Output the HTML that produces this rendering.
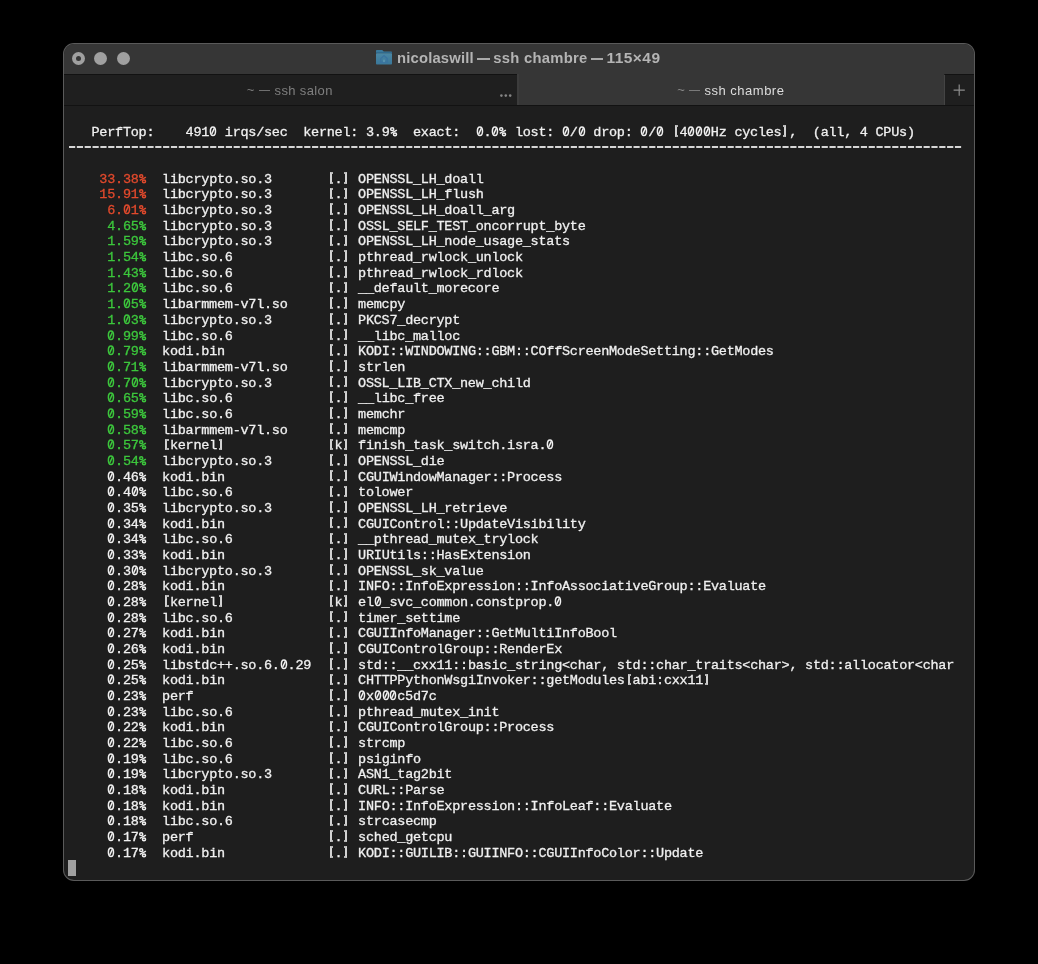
<!DOCTYPE html>
<html><head><meta charset="utf-8">
<style>
html,body{margin:0;padding:0;background:#000;width:1038px;height:964px;overflow:hidden;}
.frame{position:absolute;left:63px;top:43px;width:912px;height:838px;border-radius:11px;background:#5a5a5a;}
.win{position:absolute;left:64px;top:44px;width:910px;height:836px;border-radius:10px;background:#1e1e1e;overflow:hidden;}
.layer{position:absolute;left:0;top:0;width:910px;height:836px;will-change:transform;}
.title{position:absolute;left:0;top:0;width:910px;height:30px;background:#363636;}
.light{position:absolute;top:7.6px;width:13px;height:13px;border-radius:50%;background:#a0a0a0;}
.light.close::after{content:"";position:absolute;left:4px;top:4px;width:5px;height:5px;border-radius:50%;background:#363636;}
.tdash{position:absolute;top:13.6px;width:12.6px;height:2px;background:#aaaaaa;}
.ttext{position:absolute;top:5.8px;font-family:"Liberation Sans",sans-serif;font-weight:bold;font-size:14.8px;color:#b4b4b4;white-space:nowrap;}
.folder{position:absolute;left:312px;top:6px;}
.tab1{position:absolute;left:0;top:30px;width:453px;height:31px;background:#1f1f1f;border-top:1px solid #121212;}
.tabsep{position:absolute;left:453px;top:30px;width:2px;height:31px;background:#3c3c3c;}
.tab2{position:absolute;left:455px;top:30px;width:425px;height:31px;background:#363636;}
.plus{position:absolute;left:881px;top:30px;width:29px;height:31px;background:#1f1f1f;border-top:1px solid #121212;}
.plussep{position:absolute;left:880px;top:31px;width:1px;height:30px;background:#444;}
.tabline{position:absolute;left:0;top:61px;width:910px;height:1px;background:#121212;}
.tt{position:absolute;top:38.5px;font-family:"Liberation Sans",sans-serif;font-size:13px;letter-spacing:0.5px;white-space:nowrap;}
.tl{position:absolute;font-family:"Liberation Sans",sans-serif;font-size:13px;white-space:nowrap;top:38px;}
.md{position:absolute;top:45.9px;width:11.2px;height:1.2px;}
.dots i{position:absolute;top:50px;width:3px;height:3px;border-radius:50%;background:#8a8a8a;}
.term{position:absolute;left:4px;top:65.1px;font-family:"Liberation Mono",monospace;font-size:13.5px;letter-spacing:-0.26px;line-height:15.675px;color:#f0f0f0;-webkit-text-stroke:0.3px currentColor;white-space:pre;margin:0;}
.term div{height:15.675px;}
.dash{position:absolute;left:0;top:0;}
.c,.bl,.br{display:inline-block;font-style:normal;width:7.84px;height:15.675px;vertical-align:top;position:relative;}
.bl::before,.br::before{content:"";position:absolute;top:0.3px;width:1.2px;height:7.6px;border-top:2px solid #b4b4b4;border-bottom:2px solid #b4b4b4;}
.bl::before{left:3.4px;border-left:2px solid #d2d2d2;}
.br::before{left:1.8px;border-right:2px solid #d2d2d2;}
.c svg{position:absolute;left:0;top:0;width:8px;height:12px;fill:none;stroke:currentColor;stroke-width:1.5;overflow:visible;}
.r{color:#e0492c;}
.g{color:#3cc63c;}
.cur{position:absolute;left:4px;top:816px;width:8px;height:16px;background:#a0a0a0;}
</style></head><body>
<svg width="0" height="0" style="position:absolute"><defs><g id="z"><ellipse cx="3.95" cy="6.28" rx="2.55" ry="4.3"/><path d="M2.75 9.0L5.3 3.4"/></g><g id="p"><ellipse cx="2.2" cy="4.2" rx="1.55" ry="1.4"/><ellipse cx="5.0" cy="9.35" rx="1.55" ry="1.45"/><path d="M0.8 8.3L6.9 5.2"/></g></defs></svg>
<div class="frame"></div>
<div class="win">
<div class="layer">
 <div class="title"></div>
 <div class="light close" style="left:7.8px"></div>
 <div class="light" style="left:30.3px"></div>
 <div class="light" style="left:52.7px"></div>
 <svg class="folder" width="16" height="15" viewBox="0 0 16 15"><defs><linearGradient id="fg" x1="0" y1="0" x2="0" y2="1"><stop offset="0" stop-color="#4a87a5"/><stop offset="1" stop-color="#3a7799"/></linearGradient></defs><path d="M0.8 0h5.4l1.6 1.6h7.4a0.8 0.8 0 0 1 0.8 0.8V3H0V0.8A0.8 0.8 0 0 1 0.8 0z" fill="#3a799c"/><rect x="0" y="2.2" width="16" height="1.2" fill="#2d668a"/><rect x="0" y="3.2" width="16" height="11.3" rx="0.8" fill="url(#fg)"/><path d="M8 5.6l-3.2 3v3.8h6.4V8.6z" fill="none" stroke="#3a73a0" stroke-width="1.3"/><rect x="7.1" y="9.6" width="1.8" height="2.5" fill="#5a93b0"/></svg>
 <div class="ttext" style="left:333px;letter-spacing:0.18px">nicolaswill</div>
 <div class="tdash" style="left:413.1px"></div>
 <div class="ttext" style="left:429.3px;letter-spacing:0.27px">ssh chambre</div>
 <div class="tdash" style="left:526.6px"></div>
 <div class="ttext" style="left:542.5px;top:5.25px;font-size:15.5px;letter-spacing:0.45px">115×49</div>
 <div class="tab1"></div>
 <div class="tabsep"></div>
 <div class="tab2"></div>
 <div class="plus"></div>
 <div class="plussep"></div>
 <svg width="30" height="30" style="position:absolute;left:880px;top:31px"><path d="M15.2 9.6v11.2M9.6 15.2h11.2" stroke="#8c8c8c" stroke-width="1.2"/></svg>
 <div class="tabline"></div>
 <div class="tl" style="left:182.7px;color:#7c7c7c">~</div>
 <div class="md" style="left:194.8px;background:#6f6f6f"></div>
 <div class="tt" style="left:210.5px;color:#7f7f7f;letter-spacing:0.38px">ssh salon</div>
 <svg style="position:absolute;left:430px;top:45px" width="20" height="10" fill="#858585"><circle cx="7.4" cy="6.6" r="1.3"/><circle cx="11.8" cy="6.6" r="1.3"/><circle cx="16.2" cy="6.6" r="1.3"/></svg>
 <div class="tl" style="left:613.2px;color:#8a8a8a">~</div>
 <div class="md" style="left:625px;background:#7a7a7a"></div>
 <div class="tt" style="left:640.5px;color:#dedede">ssh chambre</div>
 <svg class="dash" width="910" height="110" fill="#d6d6d6"><rect x="5.00" y="102" width="6.2" height="2"/><rect x="12.84" y="102" width="6.2" height="2"/><rect x="20.68" y="102" width="6.2" height="2"/><rect x="28.52" y="102" width="6.2" height="2"/><rect x="36.36" y="102" width="6.2" height="2"/><rect x="44.20" y="102" width="6.2" height="2"/><rect x="52.04" y="102" width="6.2" height="2"/><rect x="59.88" y="102" width="6.2" height="2"/><rect x="67.72" y="102" width="6.2" height="2"/><rect x="75.56" y="102" width="6.2" height="2"/><rect x="83.40" y="102" width="6.2" height="2"/><rect x="91.24" y="102" width="6.2" height="2"/><rect x="99.08" y="102" width="6.2" height="2"/><rect x="106.92" y="102" width="6.2" height="2"/><rect x="114.76" y="102" width="6.2" height="2"/><rect x="122.60" y="102" width="6.2" height="2"/><rect x="130.44" y="102" width="6.2" height="2"/><rect x="138.28" y="102" width="6.2" height="2"/><rect x="146.12" y="102" width="6.2" height="2"/><rect x="153.96" y="102" width="6.2" height="2"/><rect x="161.80" y="102" width="6.2" height="2"/><rect x="169.64" y="102" width="6.2" height="2"/><rect x="177.48" y="102" width="6.2" height="2"/><rect x="185.32" y="102" width="6.2" height="2"/><rect x="193.16" y="102" width="6.2" height="2"/><rect x="201.00" y="102" width="6.2" height="2"/><rect x="208.84" y="102" width="6.2" height="2"/><rect x="216.68" y="102" width="6.2" height="2"/><rect x="224.52" y="102" width="6.2" height="2"/><rect x="232.36" y="102" width="6.2" height="2"/><rect x="240.20" y="102" width="6.2" height="2"/><rect x="248.04" y="102" width="6.2" height="2"/><rect x="255.88" y="102" width="6.2" height="2"/><rect x="263.72" y="102" width="6.2" height="2"/><rect x="271.56" y="102" width="6.2" height="2"/><rect x="279.40" y="102" width="6.2" height="2"/><rect x="287.24" y="102" width="6.2" height="2"/><rect x="295.08" y="102" width="6.2" height="2"/><rect x="302.92" y="102" width="6.2" height="2"/><rect x="310.76" y="102" width="6.2" height="2"/><rect x="318.60" y="102" width="6.2" height="2"/><rect x="326.44" y="102" width="6.2" height="2"/><rect x="334.28" y="102" width="6.2" height="2"/><rect x="342.12" y="102" width="6.2" height="2"/><rect x="349.96" y="102" width="6.2" height="2"/><rect x="357.80" y="102" width="6.2" height="2"/><rect x="365.64" y="102" width="6.2" height="2"/><rect x="373.48" y="102" width="6.2" height="2"/><rect x="381.32" y="102" width="6.2" height="2"/><rect x="389.16" y="102" width="6.2" height="2"/><rect x="397.00" y="102" width="6.2" height="2"/><rect x="404.84" y="102" width="6.2" height="2"/><rect x="412.68" y="102" width="6.2" height="2"/><rect x="420.52" y="102" width="6.2" height="2"/><rect x="428.36" y="102" width="6.2" height="2"/><rect x="436.20" y="102" width="6.2" height="2"/><rect x="444.04" y="102" width="6.2" height="2"/><rect x="451.88" y="102" width="6.2" height="2"/><rect x="459.72" y="102" width="6.2" height="2"/><rect x="467.56" y="102" width="6.2" height="2"/><rect x="475.40" y="102" width="6.2" height="2"/><rect x="483.24" y="102" width="6.2" height="2"/><rect x="491.08" y="102" width="6.2" height="2"/><rect x="498.92" y="102" width="6.2" height="2"/><rect x="506.76" y="102" width="6.2" height="2"/><rect x="514.60" y="102" width="6.2" height="2"/><rect x="522.44" y="102" width="6.2" height="2"/><rect x="530.28" y="102" width="6.2" height="2"/><rect x="538.12" y="102" width="6.2" height="2"/><rect x="545.96" y="102" width="6.2" height="2"/><rect x="553.80" y="102" width="6.2" height="2"/><rect x="561.64" y="102" width="6.2" height="2"/><rect x="569.48" y="102" width="6.2" height="2"/><rect x="577.32" y="102" width="6.2" height="2"/><rect x="585.16" y="102" width="6.2" height="2"/><rect x="593.00" y="102" width="6.2" height="2"/><rect x="600.84" y="102" width="6.2" height="2"/><rect x="608.68" y="102" width="6.2" height="2"/><rect x="616.52" y="102" width="6.2" height="2"/><rect x="624.36" y="102" width="6.2" height="2"/><rect x="632.20" y="102" width="6.2" height="2"/><rect x="640.04" y="102" width="6.2" height="2"/><rect x="647.88" y="102" width="6.2" height="2"/><rect x="655.72" y="102" width="6.2" height="2"/><rect x="663.56" y="102" width="6.2" height="2"/><rect x="671.40" y="102" width="6.2" height="2"/><rect x="679.24" y="102" width="6.2" height="2"/><rect x="687.08" y="102" width="6.2" height="2"/><rect x="694.92" y="102" width="6.2" height="2"/><rect x="702.76" y="102" width="6.2" height="2"/><rect x="710.60" y="102" width="6.2" height="2"/><rect x="718.44" y="102" width="6.2" height="2"/><rect x="726.28" y="102" width="6.2" height="2"/><rect x="734.12" y="102" width="6.2" height="2"/><rect x="741.96" y="102" width="6.2" height="2"/><rect x="749.80" y="102" width="6.2" height="2"/><rect x="757.64" y="102" width="6.2" height="2"/><rect x="765.48" y="102" width="6.2" height="2"/><rect x="773.32" y="102" width="6.2" height="2"/><rect x="781.16" y="102" width="6.2" height="2"/><rect x="789.00" y="102" width="6.2" height="2"/><rect x="796.84" y="102" width="6.2" height="2"/><rect x="804.68" y="102" width="6.2" height="2"/><rect x="812.52" y="102" width="6.2" height="2"/><rect x="820.36" y="102" width="6.2" height="2"/><rect x="828.20" y="102" width="6.2" height="2"/><rect x="836.04" y="102" width="6.2" height="2"/><rect x="843.88" y="102" width="6.2" height="2"/><rect x="851.72" y="102" width="6.2" height="2"/><rect x="859.56" y="102" width="6.2" height="2"/><rect x="867.40" y="102" width="6.2" height="2"/><rect x="875.24" y="102" width="6.2" height="2"/><rect x="883.08" y="102" width="6.2" height="2"/><rect x="890.92" y="102" width="6.2" height="2"/></svg>
 <div class="cur"></div>
 <div class="term"><div></div><div>   PerfTop:    491<i class="c"><svg><use href="#z"/></svg></i> irqs/sec  kernel: 3.9<i class="c"><svg><use href="#p"/></svg></i>  exact:  <i class="c"><svg><use href="#z"/></svg></i>.<i class="c"><svg><use href="#z"/></svg></i><i class="c"><svg><use href="#p"/></svg></i> lost: <i class="c"><svg><use href="#z"/></svg></i>/<i class="c"><svg><use href="#z"/></svg></i> drop: <i class="c"><svg><use href="#z"/></svg></i>/<i class="c"><svg><use href="#z"/></svg></i> <i class="bl"></i>4<i class="c"><svg><use href="#z"/></svg></i><i class="c"><svg><use href="#z"/></svg></i><i class="c"><svg><use href="#z"/></svg></i>Hz cycles<i class="br"></i>,  (all, 4 CPUs)</div><div></div><div></div><div><span class="r">    33.38<i class="c"><svg><use href="#p"/></svg></i></span>  libcrypto.so.3       <i class="bl"></i>.<i class="br"></i> OPENSSL_LH_doall</div><div><span class="r">    15.91<i class="c"><svg><use href="#p"/></svg></i></span>  libcrypto.so.3       <i class="bl"></i>.<i class="br"></i> OPENSSL_LH_flush</div><div><span class="r">     6.<i class="c"><svg><use href="#z"/></svg></i>1<i class="c"><svg><use href="#p"/></svg></i></span>  libcrypto.so.3       <i class="bl"></i>.<i class="br"></i> OPENSSL_LH_doall_arg</div><div><span class="g">     4.65<i class="c"><svg><use href="#p"/></svg></i></span>  libcrypto.so.3       <i class="bl"></i>.<i class="br"></i> OSSL_SELF_TEST_oncorrupt_byte</div><div><span class="g">     1.59<i class="c"><svg><use href="#p"/></svg></i></span>  libcrypto.so.3       <i class="bl"></i>.<i class="br"></i> OPENSSL_LH_node_usage_stats</div><div><span class="g">     1.54<i class="c"><svg><use href="#p"/></svg></i></span>  libc.so.6            <i class="bl"></i>.<i class="br"></i> pthread_rwlock_unlock</div><div><span class="g">     1.43<i class="c"><svg><use href="#p"/></svg></i></span>  libc.so.6            <i class="bl"></i>.<i class="br"></i> pthread_rwlock_rdlock</div><div><span class="g">     1.2<i class="c"><svg><use href="#z"/></svg></i><i class="c"><svg><use href="#p"/></svg></i></span>  libc.so.6            <i class="bl"></i>.<i class="br"></i> __default_morecore</div><div><span class="g">     1.<i class="c"><svg><use href="#z"/></svg></i>5<i class="c"><svg><use href="#p"/></svg></i></span>  libarmmem-v7l.so     <i class="bl"></i>.<i class="br"></i> memcpy</div><div><span class="g">     1.<i class="c"><svg><use href="#z"/></svg></i>3<i class="c"><svg><use href="#p"/></svg></i></span>  libcrypto.so.3       <i class="bl"></i>.<i class="br"></i> PKCS7_decrypt</div><div><span class="g">     <i class="c"><svg><use href="#z"/></svg></i>.99<i class="c"><svg><use href="#p"/></svg></i></span>  libc.so.6            <i class="bl"></i>.<i class="br"></i> __libc_malloc</div><div><span class="g">     <i class="c"><svg><use href="#z"/></svg></i>.79<i class="c"><svg><use href="#p"/></svg></i></span>  kodi.bin             <i class="bl"></i>.<i class="br"></i> KODI::WINDOWING::GBM::COffScreenModeSetting::GetModes</div><div><span class="g">     <i class="c"><svg><use href="#z"/></svg></i>.71<i class="c"><svg><use href="#p"/></svg></i></span>  libarmmem-v7l.so     <i class="bl"></i>.<i class="br"></i> strlen</div><div><span class="g">     <i class="c"><svg><use href="#z"/></svg></i>.7<i class="c"><svg><use href="#z"/></svg></i><i class="c"><svg><use href="#p"/></svg></i></span>  libcrypto.so.3       <i class="bl"></i>.<i class="br"></i> OSSL_LIB_CTX_new_child</div><div><span class="g">     <i class="c"><svg><use href="#z"/></svg></i>.65<i class="c"><svg><use href="#p"/></svg></i></span>  libc.so.6            <i class="bl"></i>.<i class="br"></i> __libc_free</div><div><span class="g">     <i class="c"><svg><use href="#z"/></svg></i>.59<i class="c"><svg><use href="#p"/></svg></i></span>  libc.so.6            <i class="bl"></i>.<i class="br"></i> memchr</div><div><span class="g">     <i class="c"><svg><use href="#z"/></svg></i>.58<i class="c"><svg><use href="#p"/></svg></i></span>  libarmmem-v7l.so     <i class="bl"></i>.<i class="br"></i> memcmp</div><div><span class="g">     <i class="c"><svg><use href="#z"/></svg></i>.57<i class="c"><svg><use href="#p"/></svg></i></span>  <i class="bl"></i>kernel<i class="br"></i>             <i class="bl"></i>k<i class="br"></i> finish_task_switch.isra.<i class="c"><svg><use href="#z"/></svg></i></div><div><span class="g">     <i class="c"><svg><use href="#z"/></svg></i>.54<i class="c"><svg><use href="#p"/></svg></i></span>  libcrypto.so.3       <i class="bl"></i>.<i class="br"></i> OPENSSL_die</div><div>     <i class="c"><svg><use href="#z"/></svg></i>.46<i class="c"><svg><use href="#p"/></svg></i>  kodi.bin             <i class="bl"></i>.<i class="br"></i> CGUIWindowManager::Process</div><div>     <i class="c"><svg><use href="#z"/></svg></i>.4<i class="c"><svg><use href="#z"/></svg></i><i class="c"><svg><use href="#p"/></svg></i>  libc.so.6            <i class="bl"></i>.<i class="br"></i> tolower</div><div>     <i class="c"><svg><use href="#z"/></svg></i>.35<i class="c"><svg><use href="#p"/></svg></i>  libcrypto.so.3       <i class="bl"></i>.<i class="br"></i> OPENSSL_LH_retrieve</div><div>     <i class="c"><svg><use href="#z"/></svg></i>.34<i class="c"><svg><use href="#p"/></svg></i>  kodi.bin             <i class="bl"></i>.<i class="br"></i> CGUIControl::UpdateVisibility</div><div>     <i class="c"><svg><use href="#z"/></svg></i>.34<i class="c"><svg><use href="#p"/></svg></i>  libc.so.6            <i class="bl"></i>.<i class="br"></i> __pthread_mutex_trylock</div><div>     <i class="c"><svg><use href="#z"/></svg></i>.33<i class="c"><svg><use href="#p"/></svg></i>  kodi.bin             <i class="bl"></i>.<i class="br"></i> URIUtils::HasExtension</div><div>     <i class="c"><svg><use href="#z"/></svg></i>.3<i class="c"><svg><use href="#z"/></svg></i><i class="c"><svg><use href="#p"/></svg></i>  libcrypto.so.3       <i class="bl"></i>.<i class="br"></i> OPENSSL_sk_value</div><div>     <i class="c"><svg><use href="#z"/></svg></i>.28<i class="c"><svg><use href="#p"/></svg></i>  kodi.bin             <i class="bl"></i>.<i class="br"></i> INFO::InfoExpression::InfoAssociativeGroup::Evaluate</div><div>     <i class="c"><svg><use href="#z"/></svg></i>.28<i class="c"><svg><use href="#p"/></svg></i>  <i class="bl"></i>kernel<i class="br"></i>             <i class="bl"></i>k<i class="br"></i> el<i class="c"><svg><use href="#z"/></svg></i>_svc_common.constprop.<i class="c"><svg><use href="#z"/></svg></i></div><div>     <i class="c"><svg><use href="#z"/></svg></i>.28<i class="c"><svg><use href="#p"/></svg></i>  libc.so.6            <i class="bl"></i>.<i class="br"></i> timer_settime</div><div>     <i class="c"><svg><use href="#z"/></svg></i>.27<i class="c"><svg><use href="#p"/></svg></i>  kodi.bin             <i class="bl"></i>.<i class="br"></i> CGUIInfoManager::GetMultiInfoBool</div><div>     <i class="c"><svg><use href="#z"/></svg></i>.26<i class="c"><svg><use href="#p"/></svg></i>  kodi.bin             <i class="bl"></i>.<i class="br"></i> CGUIControlGroup::RenderEx</div><div>     <i class="c"><svg><use href="#z"/></svg></i>.25<i class="c"><svg><use href="#p"/></svg></i>  libstdc++.so.6.<i class="c"><svg><use href="#z"/></svg></i>.29  <i class="bl"></i>.<i class="br"></i> std::__cxx11::basic_string&lt;char, std::char_traits&lt;char&gt;, std::allocator&lt;char</div><div>     <i class="c"><svg><use href="#z"/></svg></i>.25<i class="c"><svg><use href="#p"/></svg></i>  kodi.bin             <i class="bl"></i>.<i class="br"></i> CHTTPPythonWsgiInvoker::getModules<i class="bl"></i>abi:cxx11<i class="br"></i></div><div>     <i class="c"><svg><use href="#z"/></svg></i>.23<i class="c"><svg><use href="#p"/></svg></i>  perf                 <i class="bl"></i>.<i class="br"></i> <i class="c"><svg><use href="#z"/></svg></i>x<i class="c"><svg><use href="#z"/></svg></i><i class="c"><svg><use href="#z"/></svg></i><i class="c"><svg><use href="#z"/></svg></i>c5d7c</div><div>     <i class="c"><svg><use href="#z"/></svg></i>.23<i class="c"><svg><use href="#p"/></svg></i>  libc.so.6            <i class="bl"></i>.<i class="br"></i> pthread_mutex_init</div><div>     <i class="c"><svg><use href="#z"/></svg></i>.22<i class="c"><svg><use href="#p"/></svg></i>  kodi.bin             <i class="bl"></i>.<i class="br"></i> CGUIControlGroup::Process</div><div>     <i class="c"><svg><use href="#z"/></svg></i>.22<i class="c"><svg><use href="#p"/></svg></i>  libc.so.6            <i class="bl"></i>.<i class="br"></i> strcmp</div><div>     <i class="c"><svg><use href="#z"/></svg></i>.19<i class="c"><svg><use href="#p"/></svg></i>  libc.so.6            <i class="bl"></i>.<i class="br"></i> psiginfo</div><div>     <i class="c"><svg><use href="#z"/></svg></i>.19<i class="c"><svg><use href="#p"/></svg></i>  libcrypto.so.3       <i class="bl"></i>.<i class="br"></i> ASN1_tag2bit</div><div>     <i class="c"><svg><use href="#z"/></svg></i>.18<i class="c"><svg><use href="#p"/></svg></i>  kodi.bin             <i class="bl"></i>.<i class="br"></i> CURL::Parse</div><div>     <i class="c"><svg><use href="#z"/></svg></i>.18<i class="c"><svg><use href="#p"/></svg></i>  kodi.bin             <i class="bl"></i>.<i class="br"></i> INFO::InfoExpression::InfoLeaf::Evaluate</div><div>     <i class="c"><svg><use href="#z"/></svg></i>.18<i class="c"><svg><use href="#p"/></svg></i>  libc.so.6            <i class="bl"></i>.<i class="br"></i> strcasecmp</div><div>     <i class="c"><svg><use href="#z"/></svg></i>.17<i class="c"><svg><use href="#p"/></svg></i>  perf                 <i class="bl"></i>.<i class="br"></i> sched_getcpu</div><div>     <i class="c"><svg><use href="#z"/></svg></i>.17<i class="c"><svg><use href="#p"/></svg></i>  kodi.bin             <i class="bl"></i>.<i class="br"></i> KODI::GUILIB::GUIINFO::CGUIInfoColor::Update</div></div>
</div>
</div>
</body></html>
